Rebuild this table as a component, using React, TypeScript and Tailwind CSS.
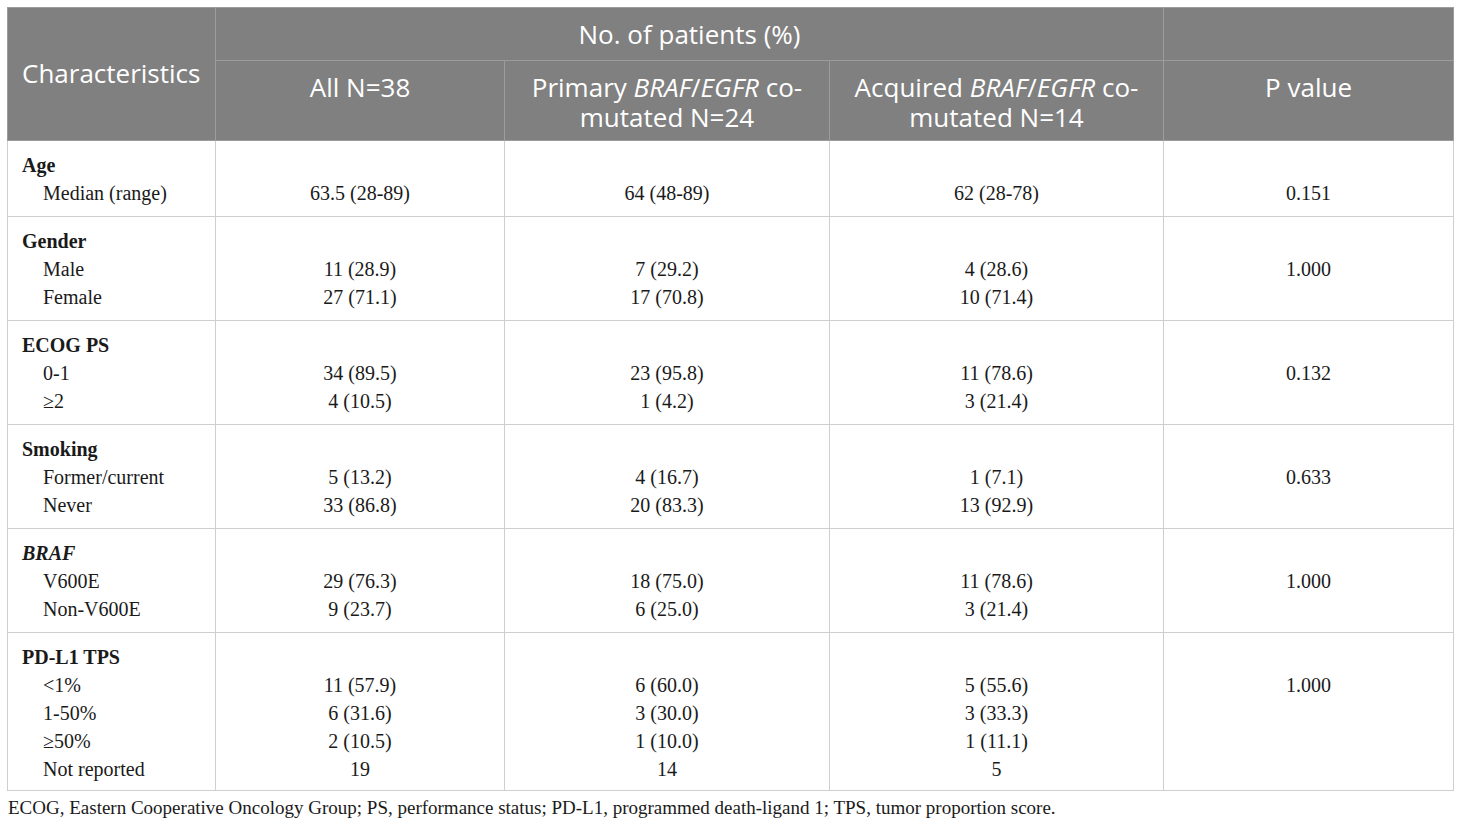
import React from "react";

type Group = {
  title: React.ReactNode;
  rows: { label: string; all: string; primary: string; acquired: string }[];
  p: string;
};

const groups: Group[] = [
  {
    title: <b>Age</b>,
    rows: [{ label: "Median (range)", all: "63.5 (28-89)", primary: "64 (48-89)", acquired: "62 (28-78)" }],
    p: "0.151",
  },
  {
    title: <b>Gender</b>,
    rows: [
      { label: "Male", all: "11 (28.9)", primary: "7 (29.2)", acquired: "4 (28.6)" },
      { label: "Female", all: "27 (71.1)", primary: "17 (70.8)", acquired: "10 (71.4)" },
    ],
    p: "1.000",
  },
  {
    title: <b>ECOG PS</b>,
    rows: [
      { label: "0-1", all: "34 (89.5)", primary: "23 (95.8)", acquired: "11 (78.6)" },
      { label: "≥2", all: "4 (10.5)", primary: "1 (4.2)", acquired: "3 (21.4)" },
    ],
    p: "0.132",
  },
  {
    title: <b>Smoking</b>,
    rows: [
      { label: "Former/current", all: "5 (13.2)", primary: "4 (16.7)", acquired: "1 (7.1)" },
      { label: "Never", all: "33 (86.8)", primary: "20 (83.3)", acquired: "13 (92.9)" },
    ],
    p: "0.633",
  },
  {
    title: <b><i>BRAF</i></b>,
    rows: [
      { label: "V600E", all: "29 (76.3)", primary: "18 (75.0)", acquired: "11 (78.6)" },
      { label: "Non-V600E", all: "9 (23.7)", primary: "6 (25.0)", acquired: "3 (21.4)" },
    ],
    p: "1.000",
  },
  {
    title: <b>PD-L1 TPS</b>,
    rows: [
      { label: "<1%", all: "11 (57.9)", primary: "6 (60.0)", acquired: "5 (55.6)" },
      { label: "1-50%", all: "6 (31.6)", primary: "3 (30.0)", acquired: "3 (33.3)" },
      { label: "≥50%", all: "2 (10.5)", primary: "1 (10.0)", acquired: "1 (11.1)" },
      { label: "Not reported", all: "19", primary: "14", acquired: "5" },
    ],
    p: "1.000",
  },
];

const th = "border border-[#9c9c9c] font-normal text-white text-center";
const td = "border border-[#cfcfcf] align-top pt-[10px] pb-[9px] last:pb-[7px]";

export default function App() {
  return (
    <div className="bg-white w-[1460px] h-[827px] pt-[7px] pl-[7px] font-['Liberation_Serif',serif] text-[20px] text-[#1a1a1a]">
      <table className="border-collapse table-fixed w-[1446px]">
        <colgroup>
          <col className="w-[208px]" />
          <col className="w-[289px]" />
          <col className="w-[325px]" />
          <col className="w-[334px]" />
          <col className="w-[290px]" />
        </colgroup>
        <thead className="bg-[#808080] font-['Open_Sans',sans-serif] text-[26px] leading-[30px]">
          <tr className="h-[53px]">
            <th rowSpan={2} className={`${th} align-middle text-left pl-[14px] pb-[2px]`}>
              Characteristics
            </th>
            <th colSpan={3} className={`${th} align-middle`}>
              No. of patients (%)
            </th>
            <th className={th}></th>
          </tr>
          <tr className="h-[80px]">
            <th className={`${th} align-top pt-[11px]`}>All N=38</th>
            <th className={`${th} align-top pt-[11px] px-2`}>
              <div>
                Primary <i>BRAF</i>/<i>EGFR</i> co-
              </div>
              <div>mutated N=24</div>
            </th>
            <th className={`${th} align-top pt-[11px] px-2`}>
              <div>
                Acquired <i>BRAF</i>/<i>EGFR</i> co-
              </div>
              <div>mutated N=14</div>
            </th>
            <th className={`${th} align-top pt-[11px]`}>P value</th>
          </tr>
        </thead>
        <tbody className="leading-[28px]">
          {groups.map((g, i) => {
            const pad = i === groups.length - 1 ? "pt-[10px] pb-[7px]" : "pt-[10px] pb-[9px]";
            const cell = `border border-[#cfcfcf] align-top ${pad}`;
            return (
              <tr key={i}>
                <td className={`${cell} pl-[14px]`}>
                  <div>{g.title}</div>
                  {g.rows.map((r) => (
                    <div key={r.label} className="pl-[21px]">
                      {r.label}
                    </div>
                  ))}
                </td>
                <td className={`${cell} text-center`}>
                  <div>&nbsp;</div>
                  {g.rows.map((r) => (
                    <div key={r.label}>{r.all}</div>
                  ))}
                </td>
                <td className={`${cell} text-center`}>
                  <div>&nbsp;</div>
                  {g.rows.map((r) => (
                    <div key={r.label}>{r.primary}</div>
                  ))}
                </td>
                <td className={`${cell} text-center`}>
                  <div>&nbsp;</div>
                  {g.rows.map((r) => (
                    <div key={r.label}>{r.acquired}</div>
                  ))}
                </td>
                <td className={`${cell} text-center`}>
                  <div>&nbsp;</div>
                  <div>{g.p}</div>
                </td>
              </tr>
            );
          })}
        </tbody>
      </table>
      <p className="mt-[5px] pl-[1px] text-[19px] leading-[24px]">
        ECOG, Eastern Cooperative Oncology Group; PS, performance status; PD-L1, programmed death-ligand 1; TPS, tumor
        proportion score.
      </p>
    </div>
  );
}
